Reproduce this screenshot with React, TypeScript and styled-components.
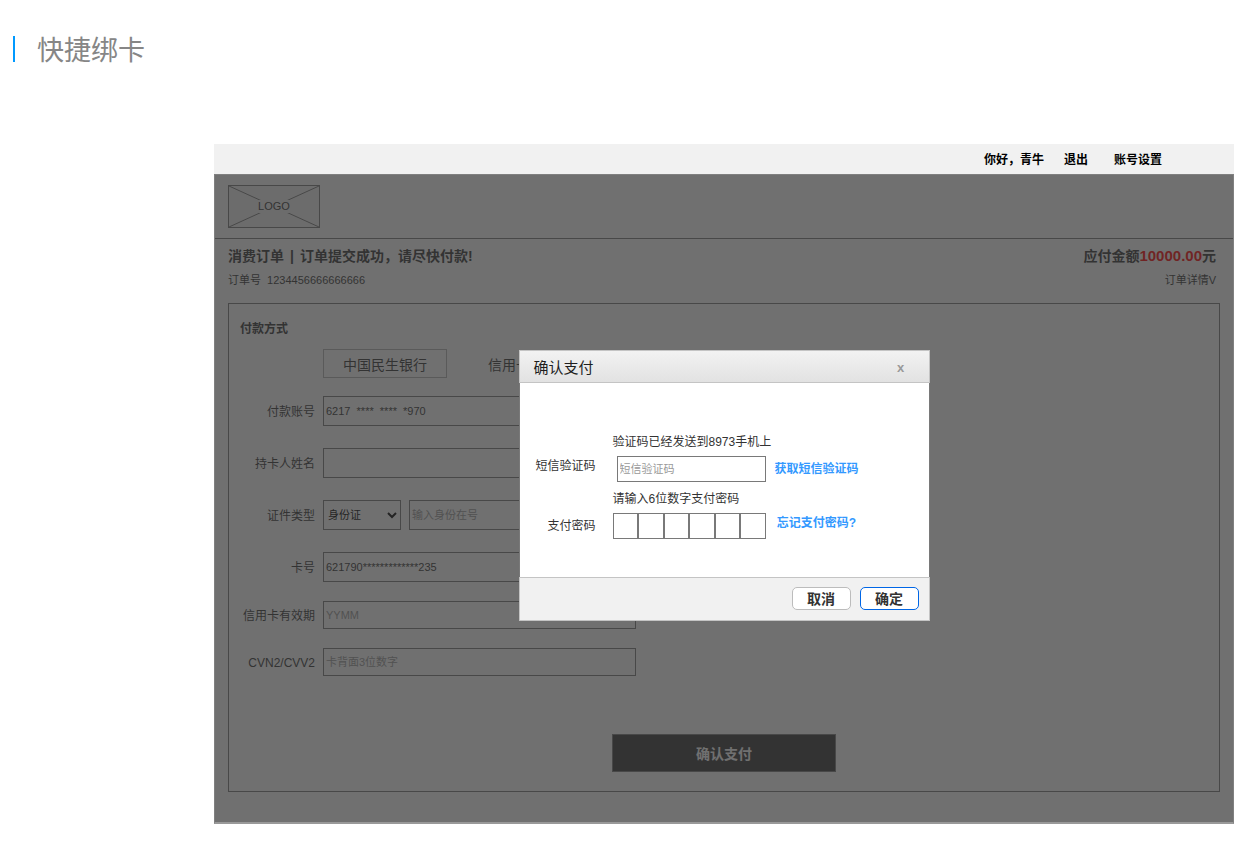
import React from "react";
import styled, { createGlobalStyle } from "styled-components";

const GlobalStyle = createGlobalStyle`
  * { box-sizing: border-box; }
  body {
    margin: 0;
    background: #fff;
    color: #333;
    font-family: "Liberation Sans", "Noto Sans CJK SC", sans-serif;
    font-size: 12px;
    line-height: 20px;
  }
  h1, h2, h3, p { margin: 0; font-weight: normal; }
  button, input, select { font-family: inherit; color: inherit; }
`;

const Page = styled.main`
  padding: 30px 20px 20px 13px;
`;

const PageTitle = styled.h1`
  display: flex;
  align-items: center;
  gap: 22px;
  height: 40px;
  padding-top: 2px;
  color: #868686;
  font-size: 27px;
  line-height: 38px;

  &::before {
    content: "";
    width: 2px;
    height: 26px;
    margin-bottom: 4px;
    background: #0099ff;
  }
`;

const Prototype = styled.section`
  margin: 74px 0 0 201px;
`;

const TopBar = styled.nav`
  display: flex;
  justify-content: flex-end;
  align-items: center;
  height: 30px;
  padding: 2px 72px 0 0;
  background: #f1f1f1;
  color: #000;
  font-weight: bold;
`;

const TopLink = styled.a<{ $gap: number }>`
  margin-left: ${(p) => p.$gap}px;
  color: inherit;
  text-decoration: none;
`;

const Screen = styled.div`
  position: relative;
  padding-bottom: 30px;
  border: 1px solid #808080;
  border-bottom: 2px solid #999;
`;

const Brand = styled.header`
  padding: 10px 13px;
  border-bottom: 1px solid #797979;

  svg { display: block; }
`;

const OrderInfo = styled.div`
  display: flex;
  justify-content: space-between;
  padding: 5px 17px 11px 13px;
`;

const OrderColumn = styled.div<{ $end?: boolean }>`
  text-align: ${(p) => (p.$end ? "right" : "left")};
`;

const OrderTitle = styled.h2`
  font-size: 14px;
  font-weight: bold;
  line-height: 24px;
  white-space: pre;
`;

const Divider = styled.span`
  margin: 0 6px;
`;

const Amount = styled.span`
  color: #f00;
  font-size: 15px;
`;

const OrderMeta = styled.p`
  font-size: 11px;
  line-height: 24px;
  white-space: pre;

  a { color: inherit; text-decoration: none; }
`;

const Card = styled.form`
  margin: 0 13px;
  padding: 15px 11px 19px;
  border: 1px solid #797979;
`;

const CardTitle = styled.h3`
  font-size: 12px;
  font-weight: bold;
`;

const Tabs = styled.div`
  display: flex;
  margin: 10px 0 18px 83px;
`;

const Tab = styled.button<{ $active?: boolean }>`
  width: 124px;
  height: 29px;
  padding: 0;
  border: 1px solid ${(p) => (p.$active ? "#b4b4b4" : "transparent")};
  background: none;
  font-size: 14px;
`;

const Fields = styled.div<{ $gap: number }>`
  display: grid;
  gap: ${(p) => p.$gap}px;
  margin-bottom: 19px;
`;

const Field = styled.div`
  display: grid;
  grid-template-columns: 75px minmax(0, 313px);
  column-gap: 8px;
  align-items: center;
`;

const Label = styled.label`
  text-align: right;
  white-space: nowrap;
`;

const FieldLabel = styled(Label)`
  padding-top: 2px;
`;

const TextInput = styled.input<{ $height: number }>`
  min-width: 0;
  width: 100%;
  height: ${(p) => p.$height}px;
  padding: 0 2px;
  border: 1px solid #797979;
  border-radius: 0;
  background: transparent;
  font-size: 11px;

  &::placeholder { color: #999; opacity: 1; }
`;

const IdGroup = styled.div`
  display: flex;
  gap: 8px;
`;

const Select = styled.select`
  flex: 0 0 78px;
  height: 30px;
  border: 1px solid #797979;
  border-radius: 0;
  background: #fff;
  color: #000;
  font-size: 11px;
`;

const PayButton = styled.button`
  display: block;
  width: 224px;
  height: 38px;
  margin: 58px auto 0;
  padding: 0;
  border: 1px solid #797979;
  background: #333;
  color: #fff;
  font-size: 14px;
  font-weight: bold;
`;

const Overlay = styled.div`
  position: absolute;
  inset: 0;
  display: flex;
  justify-content: center;
  align-items: flex-start;
  padding-top: 175px;
  background: rgba(51, 51, 51, 0.7);
`;

const Dialog = styled.div`
  width: 411px;
`;

const DialogHeader = styled.header`
  display: flex;
  justify-content: space-between;
  align-items: center;
  height: 33px;
  padding: 2px 21px 0 14px;
  border: 1px solid #c4c4c4;
  background: linear-gradient(#f2f2f2, #e2e2e2);
`;

const DialogTitle = styled.h2`
  font-size: 15px;
  color: #1e1e1e;
`;

const CloseButton = styled.button`
  width: 14px;
  height: 20px;
  padding: 0;
  border: 0;
  background: none;
  color: #999;
  font-size: 13px;
  font-weight: bold;
`;

const DialogBody = styled.div`
  display: grid;
  grid-template-columns: 76px 153px 84px;
  grid-template-rows: 17px 26px 17px 26px;
  gap: 7px 17px;
  height: 194px;
  padding-top: 49px;
  border: solid #797979;
  border-width: 0 1px;
  background: #fff;
`;

const Hint = styled.p`
  grid-column: 2 / 4;
  line-height: 20px;
`;

const DialogLabel = styled(Label)<{ $top?: boolean }>`
  align-self: ${(p) => (p.$top ? "start" : "center")};
`;

const CodeBox = styled.div`
  padding-left: 4px;
`;

const PinBoxes = styled.div`
  display: flex;
`;

const PinInput = styled.input`
  flex: 1;
  min-width: 0;
  height: 26px;
  padding: 0;
  border: 1px solid #797979;
  border-radius: 0;
  text-align: center;
`;

const ActionLink = styled.a<{ $top?: boolean }>`
  align-self: ${(p) => (p.$top ? "start" : "center")};
  justify-self: center;
  margin: 0 8px 0 -8px;
  color: #3399ff;
  font-weight: bold;
  text-decoration: none;
  white-space: nowrap;
`;

const DialogFooter = styled.footer`
  display: flex;
  justify-content: flex-end;
  gap: 9px;
  height: 44px;
  padding: 9px 10px;
  border: 1px solid #c4c4c4;
  background: #f1f1f1;
`;

const DialogButton = styled.button<{ $primary?: boolean }>`
  width: 59px;
  height: 23px;
  padding: 0;
  border: 1px solid ${(p) => (p.$primary ? "#0066e6" : "#bcbcbc")};
  border-radius: 5px;
  background: #fff;
  font-size: 14px;
  font-weight: bold;
  line-height: 20px;
`;

function Logo() {
  return (
    <svg width="92" height="43" viewBox="0 0 92 43" role="img" aria-label="LOGO">
      <rect x="0.5" y="0.5" width="91" height="42" fill="#f2f2f2" stroke="#797979" />
      <path d="M1 1L91 42M91 1L1 42" stroke="#797979" />
      <rect x="29" y="15" width="34" height="13" fill="#f2f2f2" />
      <text x="46" y="25" textAnchor="middle" fontSize="11" fill="#333">
        LOGO
      </text>
    </svg>
  );
}

type TextFieldProps = {
  id: string;
  label: string;
  height: number;
  value?: string;
  placeholder?: string;
};

function TextField({ id, label, height, value, placeholder }: TextFieldProps) {
  return (
    <Field>
      <FieldLabel htmlFor={id}>{label}</FieldLabel>
      <TextInput id={id} $height={height} defaultValue={value} placeholder={placeholder} />
    </Field>
  );
}

function PaymentForm() {
  return (
    <Card>
      <CardTitle>付款方式</CardTitle>
      <Tabs>
        <Tab type="button" $active>中国民生银行</Tab>
        <Tab type="button">信用卡</Tab>
      </Tabs>
      <Fields $gap={22}>
        <TextField id="account" label="付款账号" height={30} value="6217  ****  ****  *970" />
        <TextField id="holder" label="持卡人姓名" height={30} />
        <Field>
          <FieldLabel htmlFor="id-type">证件类型</FieldLabel>
          <IdGroup>
            <Select id="id-type">
              <option>身份证</option>
            </Select>
            <TextInput $height={30} placeholder="输入身份在号" aria-label="证件号码" />
          </IdGroup>
        </Field>
        <TextField id="card" label="卡号" height={30} value="621790*************235" />
      </Fields>
      <Fields $gap={19}>
        <TextField id="expiry" label="信用卡有效期" height={28} placeholder="YYMM" />
        <TextField id="cvv" label="CVN2/CVV2" height={28} placeholder="卡背面3位数字" />
      </Fields>
      <PayButton type="button">确认支付</PayButton>
    </Card>
  );
}

function ConfirmDialog() {
  return (
    <Dialog role="dialog" aria-labelledby="dialog-title">
      <DialogHeader>
        <DialogTitle id="dialog-title">确认支付</DialogTitle>
        <CloseButton type="button">x</CloseButton>
      </DialogHeader>
      <DialogBody>
        <Hint>验证码已经发送到8973手机上</Hint>
        <DialogLabel htmlFor="sms" $top>短信验证码</DialogLabel>
        <CodeBox>
          <TextInput id="sms" $height={26} placeholder="短信验证码" />
        </CodeBox>
        <ActionLink href="#sms">获取短信验证码</ActionLink>
        <Hint>请输入6位数字支付密码</Hint>
        <DialogLabel htmlFor="pin-1">支付密码</DialogLabel>
        <PinBoxes>
          {[1, 2, 3, 4, 5, 6].map((n) => (
            <PinInput key={n} id={`pin-${n}`} type="password" maxLength={1} aria-label={`支付密码 ${n}`} />
          ))}
        </PinBoxes>
        <ActionLink href="#forgot" $top>忘记支付密码?</ActionLink>
      </DialogBody>
      <DialogFooter>
        <DialogButton type="button">取消</DialogButton>
        <DialogButton type="button" $primary>确定</DialogButton>
      </DialogFooter>
    </Dialog>
  );
}

export default function App() {
  return (
    <>
      <GlobalStyle />
      <Page>
        <PageTitle>快捷绑卡</PageTitle>
        <Prototype>
          <TopBar>
            <span>你好，青牛</span>
            <TopLink href="#logout" $gap={20}>退出</TopLink>
            <TopLink href="#settings" $gap={26}>账号设置</TopLink>
          </TopBar>
          <Screen>
            <Brand>
              <Logo />
            </Brand>
            <OrderInfo>
              <OrderColumn>
                <OrderTitle>消费订单<Divider>|</Divider>订单提交成功，请尽快付款!</OrderTitle>
                <OrderMeta>{"订单号  1234456666666666"}</OrderMeta>
              </OrderColumn>
              <OrderColumn $end>
                <OrderTitle>应付金额<Amount>10000.00</Amount>元</OrderTitle>
                <OrderMeta><a href="#detail">订单详情V</a></OrderMeta>
              </OrderColumn>
            </OrderInfo>
            <PaymentForm />
            <Overlay>
              <ConfirmDialog />
            </Overlay>
          </Screen>
        </Prototype>
      </Page>
    </>
  );
}
